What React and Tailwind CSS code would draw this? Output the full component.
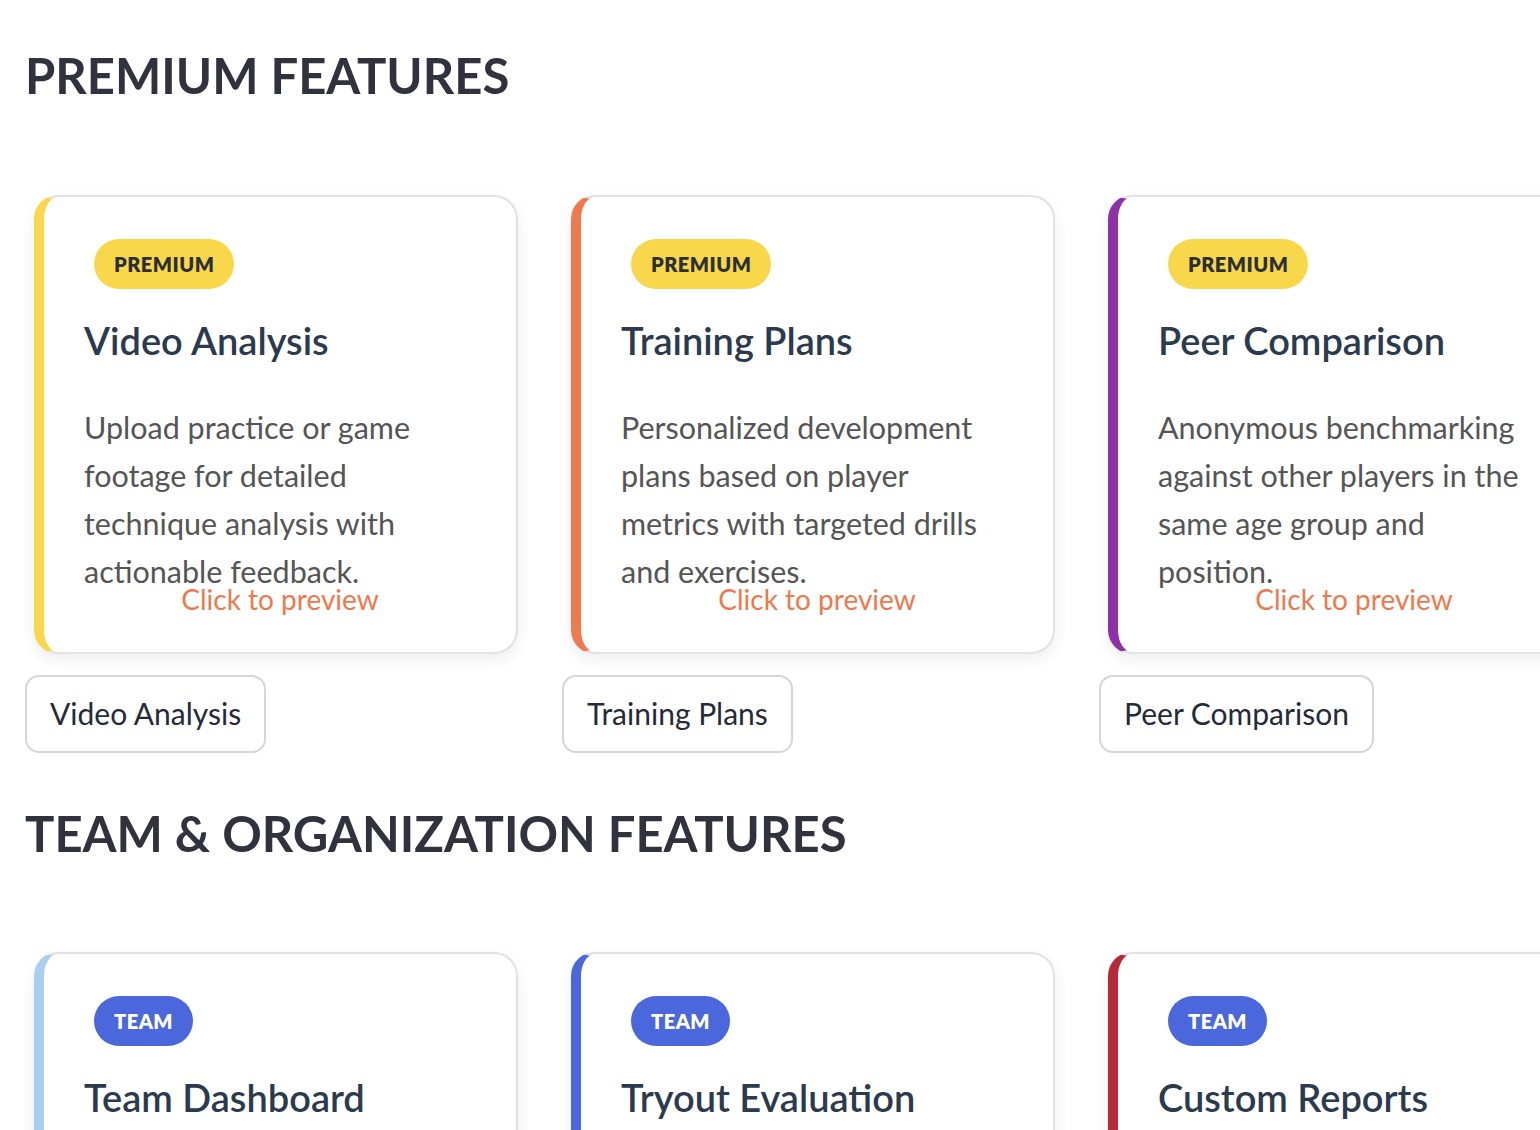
import React from "react";

const premium = [
  {
    title: "Video Analysis",
    text: "Upload practice or game footage for detailed technique analysis with actionable feedback.",
    bar: "border-l-[#f8d84a]",
  },
  {
    title: "Training Plans",
    text: "Personalized development plans based on player metrics with targeted drills and exercises.",
    bar: "border-l-[#f07a50]",
  },
  {
    title: "Peer Comparison",
    text: "Anonymous benchmarking against other players in the same age group and position.",
    bar: "border-l-[#8e30a8]",
  },
];

const team = [
  {
    title: "Team Dashboard",
    text: "Manage your whole roster in one place with shared stats, schedules and notes.",
    bar: "border-l-[#aacef0]",
  },
  {
    title: "Tryout Evaluation",
    text: "Score players during tryouts with custom criteria and compare results side by side.",
    bar: "border-l-[#4a67db]",
  },
  {
    title: "Custom Reports",
    text: "Build branded reports for parents, coaches and club directors in a few clicks.",
    bar: "border-l-[#b52a36]",
  },
];

function Badge({ kind }) {
  if (kind === "team") {
    return (
      <span className="ml-[10px] inline-flex h-[50px] items-center rounded-full bg-[#4a67db] px-[20px] text-[20px] font-extrabold tracking-[0.5px] text-white">
        TEAM
      </span>
    );
  }
  return (
    <span className="ml-[10px] inline-flex h-[50px] items-center rounded-full bg-[#f8d84a] px-[20px] text-[20px] font-extrabold tracking-[0.5px] text-[#2d2f36]">
      PREMIUM
    </span>
  );
}

function FeatureColumn({ item, kind }) {
  return (
    <div className="flex flex-col items-start">
      {/* card */}
      <div
        className={
          "ml-[9px] w-[484px] rounded-[24px] border-2 border-l-[10px] border-[#e2e2e2] bg-white px-[40px] pt-[42px] pb-[35px] shadow-[0_6px_16px_rgba(0,0,0,0.07)] " +
          item.bar
        }
      >
        <Badge kind={kind} />
        <h3 className="mt-[29px] text-[38px] leading-[1.2] font-semibold text-[#2c3a4e]">
          {item.title}
        </h3>
        <p className="mt-[40px] max-w-[372px] text-[30.5px] leading-[48px] text-[#555]">
          {item.text}
        </p>
        <div className="-mt-[12px] text-center text-[28px] leading-[1.2] text-[#f0784a]">
          Click to preview
        </div>
      </div>
      {/* button */}
      <button className="mt-[21px] h-[78px] rounded-[14px] border-2 border-[#d6d6d6] bg-white px-[23px] text-[30px] text-[#242b38]">
        {item.title}
      </button>
    </div>
  );
}

export default function App() {
  return (
    <div className="h-[1130px] w-full overflow-hidden bg-white pl-[25px] pt-[46px] font-['Lato',sans-serif]">
      <h2 className="text-[49px] leading-[1.2] font-bold text-[#30323d]">
        PREMIUM FEATURES
      </h2>
      <div className="mt-[90px] grid grid-cols-[502px_502px_502px] gap-x-[35px]">
        {premium.map((item) => (
          <FeatureColumn key={item.title} item={item} kind="premium" />
        ))}
      </div>

      <h2 className="mt-[51px] text-[49px] leading-[1.2] font-bold text-[#30323d]">
        TEAM &amp; ORGANIZATION FEATURES
      </h2>
      <div className="mt-[89px] grid grid-cols-[502px_502px_502px] gap-x-[35px]">
        {team.map((item) => (
          <FeatureColumn key={item.title} item={item} kind="team" />
        ))}
      </div>
    </div>
  );
}
